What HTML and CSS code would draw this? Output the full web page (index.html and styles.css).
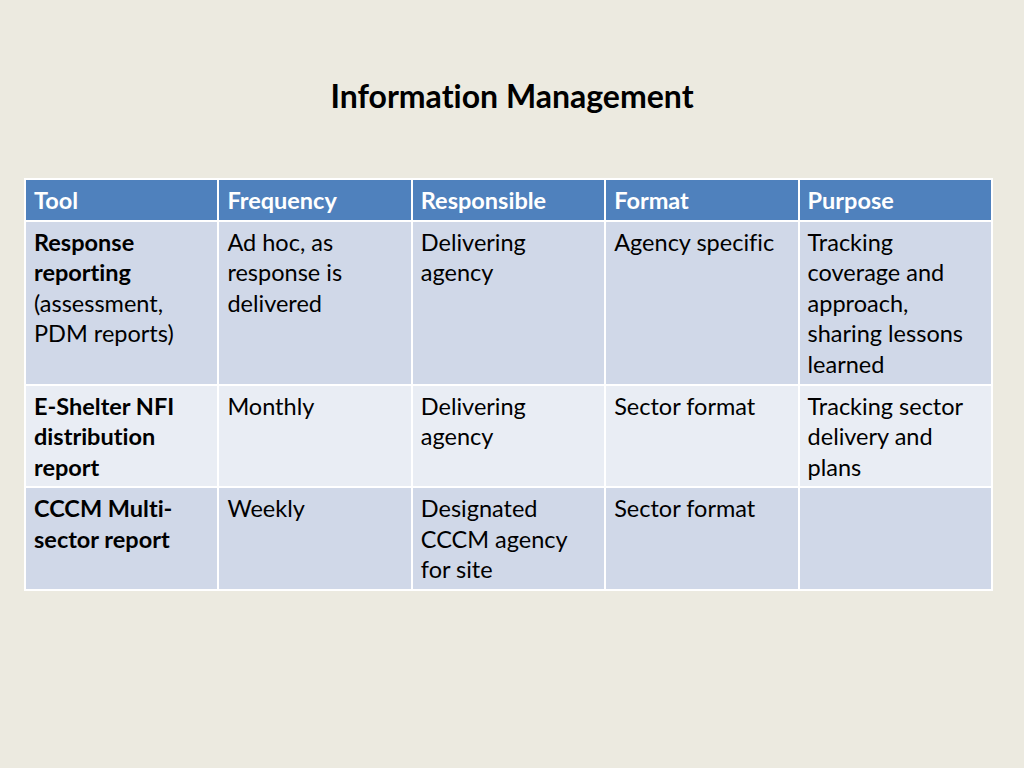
FILE: index.html
```html
<!DOCTYPE html>
<html>
<head>
<meta charset="utf-8">
<link rel="stylesheet" href="styles.css">
</head>
<body>
<div class="slide">
  <h1 class="title">Information Management</h1>
  <table class="grid">
    <thead>
      <tr class="head">
        <th>Tool</th>
        <th>Frequency</th>
        <th>Responsible</th>
        <th>Format</th>
        <th>Purpose</th>
      </tr>
    </thead>
    <tbody>
      <tr class="dark r1">
        <td><b>Response reporting</b> (assessment, PDM reports)</td>
        <td>Ad hoc, as response is delivered</td>
        <td>Delivering agency</td>
        <td>Agency specific</td>
        <td>Tracking coverage and approach, sharing lessons learned</td>
      </tr>
      <tr class="light r2">
        <td><b>E-Shelter NFI distribution report</b></td>
        <td>Monthly</td>
        <td>Delivering agency</td>
        <td>Sector format</td>
        <td>Tracking sector delivery and plans</td>
      </tr>
      <tr class="dark r3">
        <td><b>CCCM Multi-sector report</b></td>
        <td>Weekly</td>
        <td>Designated CCCM agency for site</td>
        <td>Sector format</td>
        <td></td>
      </tr>
    </tbody>
  </table>
</div>
</body>
</html>
```
FILE: styles.css
```css
html, body {
  margin: 0;
  padding: 0;
}
body {
  background: #eceae0;
  font-family: Lato, "Open Sans", sans-serif;
  font-variant-ligatures: none;
  color: #000;
}
.slide {
  width: 1024px;
  height: 768px;
  padding-top: 76px;
  box-sizing: border-box;
}
.title {
  margin: 0;
  text-align: center;
  font-size: 32px;
  line-height: 40px;
  font-weight: 700;
}
.grid {
  margin: 62px 0 0 24px;
  width: 969px;
  border-collapse: collapse;
  table-layout: fixed;
  font-size: 23.5px;
  line-height: 30.5px;
}
.grid th, .grid td {
  border: 2px solid #ffffff;
  padding: 5px 10px 4px 8px;
  text-align: left;
  vertical-align: top;
}
.grid th {
  background: #4f81bd;
  color: #ffffff;
  font-weight: 700;
}
.dark td {
  background: #d0d8e8;
}
.light td {
  background: #e9edf4;
}
.r1 td { height: 153px; }
.r2 td, .r3 td { height: 91px; }
```
